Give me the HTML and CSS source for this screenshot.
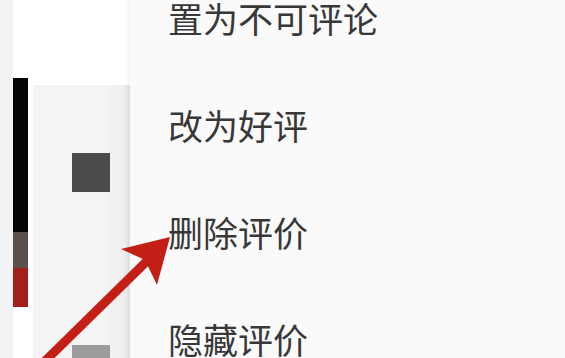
FILE: index.html
```html
<!DOCTYPE html>
<html lang="zh">
<head>
<meta charset="utf-8">
<link rel="stylesheet" href="styles.css">
</head>
<body>
<div class="screen">
  <div class="edge"></div>
  <div class="content">
    <div class="bars">
      <div class="bar-space"></div>
      <div class="bar bar-black"></div>
      <div class="bar bar-brown"></div>
      <div class="bar bar-red"></div>
    </div>
    <div class="pane">
      <div class="pane-top"></div>
      <div class="pane-body">
        <div class="pane-main">
          <div class="sq sq-dark"></div>
          <div class="sq sq-light"></div>
        </div>
        <div class="pane-band"></div>
      </div>
    </div>
  </div>
  <ul class="menu">
    <li class="item">置为不可评论</li>
    <li class="item">改为好评</li>
    <li class="item">删除评价</li>
    <li class="item">隐藏评价</li>
  </ul>
  <svg class="arrow" width="565" height="358" viewBox="0 0 565 358">
    <line x1="38" y1="368" x2="148" y2="260" stroke="#c41f17" stroke-width="9"/>
    <polygon points="170,237 121,249 145,260 157,285" fill="#c41f17"/>
  </svg>
</div>
</body>
</html>
```
FILE: styles.css
```css
html, body {
  margin: 0;
  padding: 0;
  background: #fafafa;
}
.screen {
  position: relative;
  width: 565px;
  height: 358px;
  display: flex;
  align-items: flex-start;
  overflow: hidden;
  font-family: "Noto Sans CJK SC", "Noto Sans", sans-serif;
}
.edge {
  width: 13px;
  height: 358px;
  background: #f2f3f5;
  flex: none;
}
.content {
  width: 117px;
  height: 358px;
  flex: none;
  display: flex;
  background: #ffffff;
  overflow: hidden;
}
.bars {
  width: 15px;
  flex: none;
  display: flex;
  flex-direction: column;
}
.bar { flex: none; }
.bar-space { height: 78px; flex: none; }
.bar-black { height: 154px; background: #050505; }
.bar-brown { height: 36px; background: #5c504c; }
.bar-red { height: 39px; background: #a51e1e; }
.pane {
  flex: 1;
  display: flex;
  flex-direction: column;
  margin-left: 5px;
}
.pane-top { height: 85px; flex: none; }
.pane-body {
  flex: 1;
  min-height: 0;
  display: flex;
  background: #f4f4f4;
  overflow: hidden;
}
.pane-main {
  width: 77px;
  flex: none;
  display: flex;
  flex-direction: column;
  padding-left: 39px;
  padding-top: 68px;
  box-sizing: border-box;
}
.sq {
  width: 38px;
  height: 39px;
  flex: none;
}
.sq-dark { background: #4b4b4b; }
.sq-light { background: #9c9c9c; margin-top: 153px; }
.pane-band {
  flex: 1;
  background: linear-gradient(to right, #f2f2f2 0%, #eeeeee 70%, #e6e6e6 100%);
}
.menu {
  list-style: none;
  margin: -36px 0 0 0;
  padding: 0 0 0 38px;
  flex: 1;
  background: #fafafa;
  box-shadow: -2px 0 4px rgba(0,0,0,0.06);
}
.item {
  height: 107px;
  line-height: 107px;
  font-size: 35px;
  color: #383838;
  white-space: nowrap;
}
.arrow {
  position: absolute;
  left: 0;
  top: 0;
}
```
